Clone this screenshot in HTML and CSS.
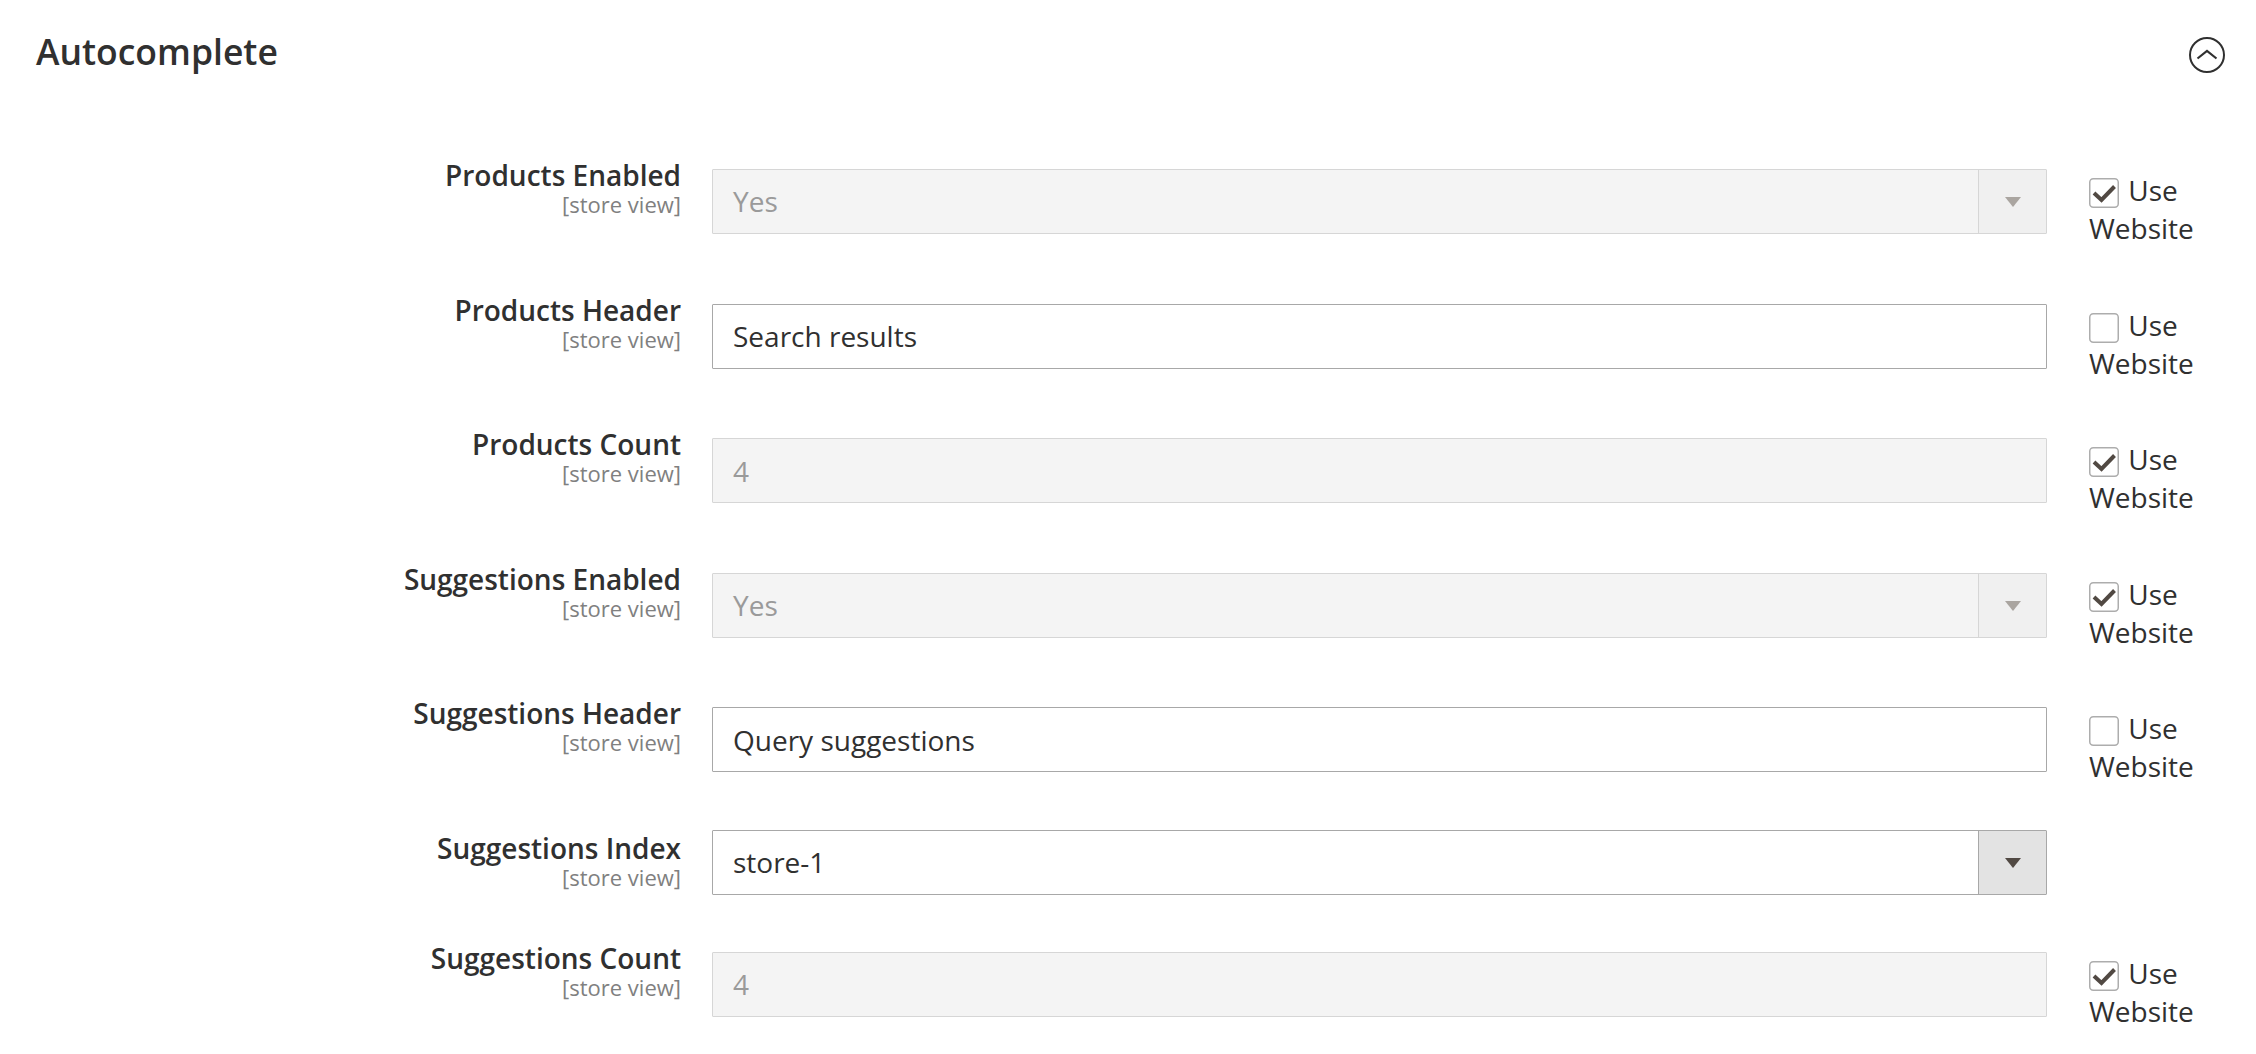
FILE: index.html
```html
<!DOCTYPE html>
<html lang="en">
<head>
<meta charset="utf-8">
<title>Autocomplete</title>
<link rel="stylesheet" href="styles.css">
</head>
<body>
<section class="section">
  <header class="section-head">
    <h2 class="section-title">Autocomplete</h2>
    <button class="collapse" type="button" aria-label="Collapse">
      <svg width="38" height="38" viewBox="0 0 38 38"><circle cx="19" cy="19" r="17" fill="none" stroke="#303030" stroke-width="2"/><path d="M9.5 22.5 L19 15 L28.5 22.5" fill="none" stroke="#303030" stroke-width="2.2"/></svg>
    </button>
  </header>

  <div class="form">
    <div class="row row--tall">
      <div class="label"><span class="label-text">Products Enabled</span><span class="scope">[store view]</span></div>
      <div class="control">
        <div class="select select--disabled"><span class="select-value">Yes</span><span class="select-arrow"><i class="tri"></i></span></div>
      </div>
      <label class="use"><span class="cb"><svg width="30" height="30" viewBox="0 0 30 30"><rect x="0.75" y="0.75" width="28.5" height="28.5" rx="3.5" fill="#fff" stroke="#adadad" stroke-width="1.5"/><path d="M5 15 L12.5 22 L25.5 8.5" fill="none" stroke="#514943" stroke-width="4"/></svg></span> Use Website</label>
    </div>

    <div class="row row--tall">
      <div class="label"><span class="label-text">Products Header</span><span class="scope">[store view]</span></div>
      <div class="control">
        <input class="input" type="text" value="Search results">
      </div>
      <label class="use"><span class="cb"><svg width="30" height="30" viewBox="0 0 30 30"><rect x="0.75" y="0.75" width="28.5" height="28.5" rx="3.5" fill="#fff" stroke="#adadad" stroke-width="1.5"/></svg></span> Use Website</label>
    </div>

    <div class="row row--tall">
      <div class="label"><span class="label-text">Products Count</span><span class="scope">[store view]</span></div>
      <div class="control">
        <input class="input input--disabled" type="text" value="4" disabled>
      </div>
      <label class="use"><span class="cb"><svg width="30" height="30" viewBox="0 0 30 30"><rect x="0.75" y="0.75" width="28.5" height="28.5" rx="3.5" fill="#fff" stroke="#adadad" stroke-width="1.5"/><path d="M5 15 L12.5 22 L25.5 8.5" fill="none" stroke="#514943" stroke-width="4"/></svg></span> Use Website</label>
    </div>

    <div class="row row--tall">
      <div class="label"><span class="label-text">Suggestions Enabled</span><span class="scope">[store view]</span></div>
      <div class="control">
        <div class="select select--disabled"><span class="select-value">Yes</span><span class="select-arrow"><i class="tri"></i></span></div>
      </div>
      <label class="use"><span class="cb"><svg width="30" height="30" viewBox="0 0 30 30"><rect x="0.75" y="0.75" width="28.5" height="28.5" rx="3.5" fill="#fff" stroke="#adadad" stroke-width="1.5"/><path d="M5 15 L12.5 22 L25.5 8.5" fill="none" stroke="#514943" stroke-width="4"/></svg></span> Use Website</label>
    </div>

    <div class="row row--tall">
      <div class="label"><span class="label-text">Suggestions Header</span><span class="scope">[store view]</span></div>
      <div class="control">
        <input class="input" type="text" value="Query suggestions">
      </div>
      <label class="use"><span class="cb"><svg width="30" height="30" viewBox="0 0 30 30"><rect x="0.75" y="0.75" width="28.5" height="28.5" rx="3.5" fill="#fff" stroke="#adadad" stroke-width="1.5"/></svg></span> Use Website</label>
    </div>

    <div class="row">
      <div class="label"><span class="label-text">Suggestions Index</span><span class="scope">[store view]</span></div>
      <div class="control control--raised">
        <div class="select"><span class="select-value">store-1</span><span class="select-arrow"><i class="tri"></i></span></div>
      </div>
    </div>

    <div class="row">
      <div class="label"><span class="label-text">Suggestions Count</span><span class="scope">[store view]</span></div>
      <div class="control">
        <input class="input input--disabled" type="text" value="4" disabled>
      </div>
      <label class="use"><span class="cb"><svg width="30" height="30" viewBox="0 0 30 30"><rect x="0.75" y="0.75" width="28.5" height="28.5" rx="3.5" fill="#fff" stroke="#adadad" stroke-width="1.5"/><path d="M5 15 L12.5 22 L25.5 8.5" fill="none" stroke="#514943" stroke-width="4"/></svg></span> Use Website</label>
    </div>
  </div>
</section>
</body>
</html>
```

FILE: styles.css
```css
* { box-sizing: border-box; }

html, body {
  margin: 0;
  padding: 0;
  background: #ffffff;
}

body {
  font-family: "Open Sans", "Liberation Sans", sans-serif;
  color: #303030;
  width: 2256px;
  height: 1054px;
  overflow: hidden;
}

.section-head {
  display: flex;
  justify-content: space-between;
  align-items: flex-start;
  padding: 27px 30px 0 36px;
}

.section-title {
  margin: 0;
  font-size: 35.5px;
  font-weight: 600;
  line-height: 49px;
  color: #303030;
}

.collapse {
  margin: 9px 0 0 0;
  padding: 0;
  border: 0;
  background: transparent;
  width: 38px;
  height: 38px;
  display: block;
}

.collapse svg { display: block; }

.form {
  margin-top: 36px;
}

.row {
  display: flex;
  align-items: flex-start;
  padding-top: 47px;
}

.row--tall {
  padding-bottom: 12.5px;
}

.label {
  width: 681px;
  flex: 0 0 681px;
  display: flex;
  flex-direction: column;
  align-items: flex-end;
  text-align: right;
}

.label-text {
  font-size: 28px;
  font-weight: 600;
  line-height: 32px;
  color: #303030;
}

.scope {
  font-size: 22px;
  line-height: 26px;
  color: #808080;
}

.control {
  margin-left: 31px;
  margin-top: 10px;
  width: 1335px;
  flex: 0 0 1335px;
}

.control--raised {
  margin-top: -2px;
}

.input {
  display: block;
  width: 100%;
  height: 65px;
  margin: 0;
  padding: 0 20px;
  border: 1px solid #a8a8a8;
  border-radius: 1px;
  background: #ffffff;
  font-family: "Open Sans", "Liberation Sans", sans-serif;
  font-size: 28px;
  color: #303030;
  outline: none;
}

.input--disabled {
  background: #f4f4f4;
  border-color: #d6d6d6;
  color: #9a9a9a;
  -webkit-text-fill-color: #9a9a9a;
  opacity: 1;
}

.select {
  display: flex;
  height: 65px;
  border: 1px solid #a8a8a8;
  border-radius: 1px;
  background: #ffffff;
}

.select-value {
  flex: 1;
  padding-left: 20px;
  font-size: 28px;
  line-height: 63px;
  color: #303030;
}

.select-arrow {
  width: 68px;
  flex: 0 0 68px;
  border-left: 1px solid #a8a8a8;
  background: #e3e3e3;
  display: flex;
  align-items: center;
  justify-content: center;
}

.tri {
  display: block;
  width: 0;
  height: 0;
  border-left: 8px solid transparent;
  border-right: 8px solid transparent;
  border-top: 10px solid #514943;
  margin-top: 1px;
}

.select--disabled {
  background: #f4f4f4;
  border-color: #d6d6d6;
}

.select--disabled .select-value {
  color: #9a9a9a;
}

.select--disabled .select-arrow {
  background: #f0f0f0;
  border-left-color: #d6d6d6;
}

.select--disabled .tri {
  border-top-color: #aaa5a0;
}

.use {
  margin-left: 42px;
  margin-top: 12px;
  width: 140px;
  height: 63px;
  font-size: 28px;
  line-height: 38px;
  color: #303030;
}

.cb {
  display: inline-block;
  width: 30px;
  height: 30px;
  vertical-align: -7px;
  margin-right: 2px;
}

.cb svg { display: block; }
```
